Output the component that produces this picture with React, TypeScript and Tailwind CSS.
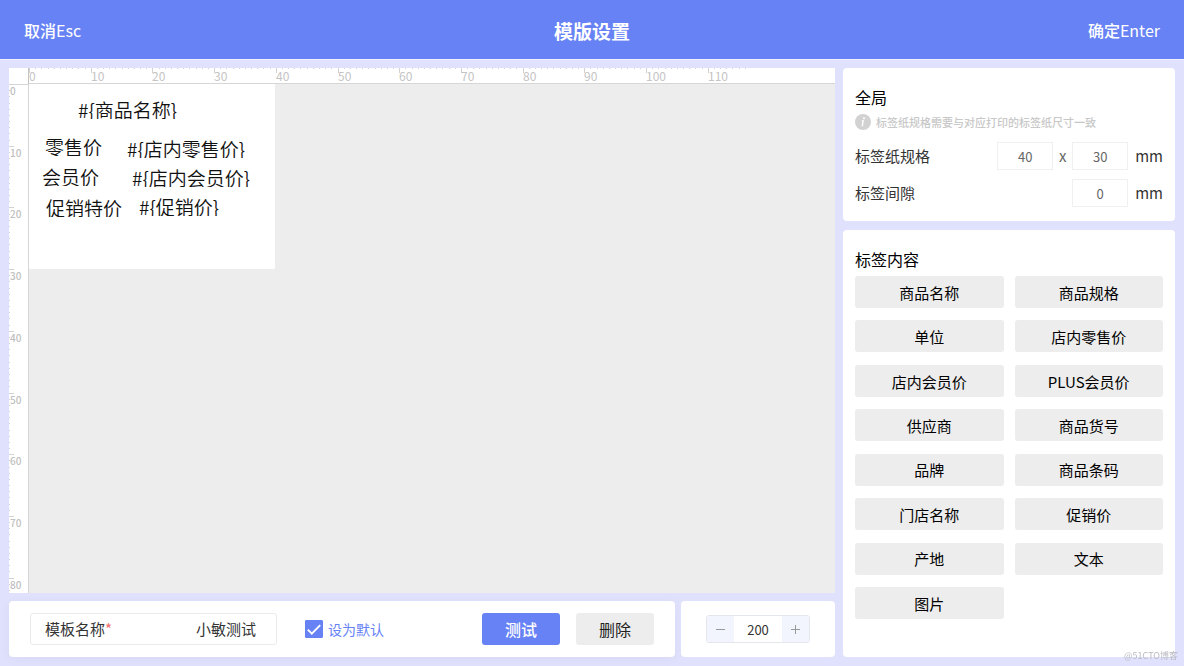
import { useState } from "react";

type Field = { text: string; left: number; top: number };

const UNIT = 6.17;

const placedFields: Field[] = [
  { text: "#{商品名称}", left: 49, top: 14 },
  { text: "零售价", left: 16, top: 51 },
  { text: "#{店内零售价}", left: 98, top: 53 },
  { text: "会员价", left: 13, top: 81 },
  { text: "#{店内会员价}", left: 103, top: 82 },
  { text: "促销特价", left: 17, top: 112 },
  { text: "#{促销价}", left: 110, top: 111 },
];

const contentFields = [
  "商品名称",
  "商品规格",
  "单位",
  "店内零售价",
  "店内会员价",
  "PLUS会员价",
  "供应商",
  "商品货号",
  "品牌",
  "商品条码",
  "门店名称",
  "促销价",
  "产地",
  "文本",
  "图片",
];

function HorizontalRuler() {
  const ticks = Array.from({ length: 117 }, (_, i) => i);
  return (
    <svg className="block h-4 w-full" aria-hidden="true">
      {ticks.map((i) => {
        const x = Math.round(i * UNIT);
        return (
          <g key={i}>
            <rect x={x} y="0" width="1" height={i % 10 === 0 ? 5 : 1} fill="#d2d2d2" />
            {i % 10 === 0 && (
              <text x={x} y="13" fontSize="12" fill="#c4c4c4">
                {i}
              </text>
            )}
          </g>
        );
      })}
    </svg>
  );
}

function VerticalRuler() {
  const ticks = Array.from({ length: 83 }, (_, i) => i);
  return (
    <svg className="block h-full w-full" aria-hidden="true">
      <rect x="0" y="0" width="100%" height="1" fill="#d6d6d6" />
      {ticks.map((i) => {
        const y = Math.round(i * UNIT);
        return (
          <g key={i}>
            <rect x="0" y={y} width={i % 10 === 0 ? 5 : 1} height="1" fill="#d2d2d2" />
            {i % 10 === 0 && (
              <text x="1" y={y + 11} fontSize="10" fontWeight="500" fill="#c0c0c0">
                {i}
              </text>
            )}
          </g>
        );
      })}
    </svg>
  );
}

function LabelCanvas() {
  return (
    <section
      aria-label="标签画布"
      className="grid min-h-0 flex-1 grid-cols-[20px_minmax(0,1fr)] grid-rows-[16px_minmax(0,1fr)] overflow-hidden bg-white"
    >
      <div className="border-r border-[#c4c4c4]" />
      <div className="overflow-hidden border-b border-[#d6d6d6]">
        <HorizontalRuler />
      </div>
      <div className="overflow-hidden border-r border-[#d6d6d6]">
        <VerticalRuler />
      </div>
      <div className="overflow-hidden bg-[#ededed]">
        <div className="relative h-[185px] w-[246px] bg-white">
          {placedFields.map((f) => (
            <div
              key={f.text}
              className="absolute h-[21px] overflow-hidden text-[19px] leading-6 font-[350] whitespace-nowrap text-[#111]"
              style={{ left: f.left, top: f.top }}
            >
              {f.text}
            </div>
          ))}
        </div>
      </div>
    </section>
  );
}

function Toolbar() {
  const [name, setName] = useState("小敏测试");
  const [isDefault, setIsDefault] = useState(true);
  const [zoom, setZoom] = useState(200);
  return (
    <div className="flex h-14 shrink-0 gap-1.5">
      <div className="flex flex-1 items-center rounded bg-white px-[21px] shadow-[0_2px_12px_rgba(0,0,0,0.04)]">
        <div className="flex h-8 w-[247px] items-center rounded-[3px] border border-[#ebebeb] pr-5 pl-[14px] text-[15px] text-[#333]">
          <label htmlFor="template-name" className="shrink-0">
            模板名称<span className="text-[#f56c6c]">*</span>
          </label>
          <input
            id="template-name"
            className="w-full min-w-0 bg-transparent text-right outline-none"
            value={name}
            onChange={(e) => setName(e.target.value)}
          />
        </div>
        <label className="ml-7 flex items-center gap-[5px] text-sm text-[#6782f5]">
          <span className="grid size-[18px]">
            <input
              type="checkbox"
              className="col-start-1 row-start-1 size-[18px] appearance-none rounded-[1px] border border-[#6782f5] checked:bg-[#6782f5]"
              checked={isDefault}
              onChange={(e) => setIsDefault(e.target.checked)}
            />
            {isDefault && (
              <svg viewBox="0 0 18 18" className="pointer-events-none col-start-1 row-start-1 size-[18px]" aria-hidden="true">
                <path d="M2.8 9.6 6.8 13.6 15.2 5.2" fill="none" stroke="#fff" strokeWidth="1.9" />
              </svg>
            )}
          </span>
          设为默认
        </label>
        <button type="button" className="ml-auto h-8 w-[78px] rounded-[3px] bg-[#6782f5] text-base font-medium text-white">
          测试
        </button>
        <button type="button" className="ml-4 h-8 w-[78px] rounded-[3px] bg-[#ededed] text-base text-[#222]">
          删除
        </button>
      </div>
      <div className="flex w-[154px] items-center justify-center rounded bg-white">
        <div className="flex h-7 w-26 overflow-hidden rounded-[3px] border border-[#e4e6ee]">
          <button
            type="button"
            aria-label="缩小"
            className="flex w-[27px] items-center justify-center bg-[#f2f4fe] text-[#999]"
            onClick={() => setZoom(zoom - 10)}
          >
            <svg viewBox="0 0 9 9" className="size-[9px]" aria-hidden="true">
              <path d="M0 4.5h9" stroke="currentColor" strokeWidth="1" />
            </svg>
          </button>
          <input
            aria-label="缩放"
            className="min-w-0 flex-1 pt-px text-center text-[13px] text-[#333] outline-none"
            value={zoom}
            onChange={(e) => setZoom(Number(e.target.value) || 0)}
          />
          <button
            type="button"
            aria-label="放大"
            className="flex w-[27px] items-center justify-center bg-[#f2f4fe] text-[#999]"
            onClick={() => setZoom(zoom + 10)}
          >
            <svg viewBox="0 0 9 9" className="size-[9px]" aria-hidden="true">
              <path d="M0 4.5h9M4.5 0v9" stroke="currentColor" strokeWidth="1" />
            </svg>
          </button>
        </div>
      </div>
    </div>
  );
}

const sizeInput = "h-7 w-14 border border-[#f0f0f0] text-center text-[13px] text-[#666] outline-none";

function GlobalCard() {
  return (
    <section className="shrink-0 rounded bg-white px-3 pt-[17px] pb-[14px]">
      <h2 className="text-base leading-6 text-black">全局</h2>
      <p className="flex h-[26px] items-center gap-[5px] text-[11px] font-medium text-[#c8c8c8]">
        <svg viewBox="0 0 16 16" className="size-4" aria-hidden="true">
          <circle cx="8" cy="8" r="8" fill="#d2d2d2" />
          <path d="M8.3 6.4 7.3 11.6M6.9 6.6h1.6M6.6 11.7h1.5" stroke="#fff" strokeWidth="1.3" />
          <circle cx="9" cy="4.2" r="1" fill="#fff" />
        </svg>
        标签纸规格需要与对应打印的标签纸尺寸一致
      </p>
      <div className="mt-[7px] flex h-7 items-center text-[15px] text-[#333]">
        <label htmlFor="paper-width" className="mr-auto">
          标签纸规格
        </label>
        <input id="paper-width" className={sizeInput} defaultValue="40" />
        <span className="w-[19px] text-center text-[#666]">x</span>
        <input aria-label="标签纸高度" className={sizeInput} defaultValue="30" />
        <span className="ml-[7px]">mm</span>
      </div>
      <div className="mt-[9px] flex h-7 items-center text-[15px] text-[#333]">
        <label htmlFor="label-gap" className="mr-auto">
          标签间隙
        </label>
        <input id="label-gap" className={sizeInput} defaultValue="0" />
        <span className="ml-[7px]">mm</span>
      </div>
    </section>
  );
}

function ContentCard() {
  return (
    <section className="flex flex-1 flex-col rounded bg-white px-3 pt-[17px] pb-[38px]">
      <h2 className="text-base leading-6 text-black">标签内容</h2>
      <div className="mt-[5px] grid flex-1 grid-cols-2 content-between gap-x-[11px]">
        {contentFields.map((f) => (
          <button key={f} type="button" className="h-8 rounded-[3px] bg-[#ededed] pt-0.5 text-[15px] text-black">
            {f}
          </button>
        ))}
      </div>
    </section>
  );
}

export default function App() {
  return (
    <div className="flex h-screen min-h-[640px] flex-col bg-[#e0e1fc] font-['Noto_Sans_CJK_SC','Noto_Sans',sans-serif]">
      <header className="grid h-[59px] shrink-0 grid-cols-3 items-center bg-[#6782f5] px-6 pt-1 text-white">
        <button type="button" className="justify-self-start pb-1 text-base font-medium">
          取消<span className="font-normal">Esc</span>
        </button>
        <h1 className="text-center text-[19px] font-bold">模版设置</h1>
        <button type="button" className="justify-self-end pb-1 text-base font-medium">
          确定<span className="font-normal">Enter</span>
        </button>
      </header>
      <main className="flex min-h-0 flex-1 gap-2 border-t border-[#f0f0fd] px-[9px] pt-2 pb-[9px]">
        <div className="flex min-w-0 flex-1 flex-col gap-2">
          <LabelCanvas />
          <Toolbar />
        </div>
        <aside className="flex w-[332px] shrink-0 flex-col gap-[9px]">
          <GlobalCard />
          <ContentCard />
        </aside>
      </main>
      <div className="pointer-events-none fixed right-1.5 bottom-0.5 text-[9px] leading-4 text-[#b9b9c2]">@51CTO博客</div>
    </div>
  );
}
